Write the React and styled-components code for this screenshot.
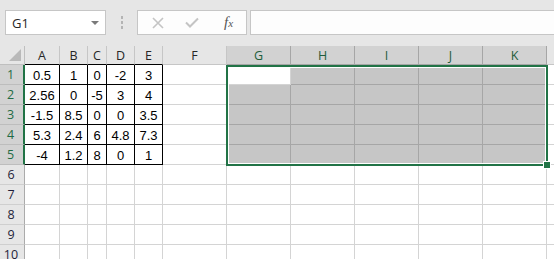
import React from 'react';
import styled, { createGlobalStyle } from 'styled-components';

const GlobalStyle = createGlobalStyle`
    html, body{
        margin: 0;
        padding: 0;
        background: #ffffff;
        overflow: hidden;
    }
    body{
        font-family: "Liberation Sans", Arial, sans-serif;
    }
`

// spreadsheet data (L only shows its gridlines at the right edge)
const columns = [
    { name: 'A', width: 35 },
    { name: 'B', width: 28 },
    { name: 'C', width: 19 },
    { name: 'D', width: 28 },
    { name: 'E', width: 28 },
    { name: 'F', width: 64 },
    { name: 'G', width: 64 },
    { name: 'H', width: 64 },
    { name: 'I', width: 64 },
    { name: 'J', width: 64 },
    { name: 'K', width: 64 },
    { name: '', width: 64 },
];

const values = [
    ['0.5', '1', '0', '-2', '3'],
    ['2.56', '0', '-5', '3', '4'],
    ['-1.5', '8.5', '0', '0', '3.5'],
    ['5.3', '2.4', '6', '4.8', '7.3'],
    ['-4', '1.2', '8', '0', '1'],
];

const rowCount = 10;
const selectedCols = ['G', 'H', 'I', 'J', 'K'];

const App = () => {
    return (
        <>
            <GlobalStyle />
            <Toolbar>
                <NameBox>
                    <NameText>G1</NameText>
                    <Caret />
                </NameBox>
                <Grip>
                    <span /><span /><span />
                </Grip>
                <FormulaButtons>
                    <svg width="12" height="12" viewBox="0 0 12 12">
                        <path d="M1 1 L11 11 M11 1 L1 11" stroke="#c4c4c4" strokeWidth="1.6" fill="none" />
                    </svg>
                    <svg width="14" height="11" viewBox="0 0 14 11">
                        <path d="M1 5.5 L5 9.5 L13 1.5" stroke="#c4c4c4" strokeWidth="2" fill="none" />
                    </svg>
                    <Fx>f<small>x</small></Fx>
                </FormulaButtons>
                <FormulaInput />
            </Toolbar>

            <Sheet $cols={columns.map((c) => c.width + 'px').join(' ')}>
                <Corner><CornerTriangle /></Corner>
                {columns.map((col, i) => (
                    <ColHeader
                        key={i}
                        $selected={selectedCols.includes(col.name)}
                        $boxed={i < 5}
                    >
                        {col.name}
                    </ColHeader>
                ))}

                {Array.from({ length: rowCount }).map((_, r) => (
                    <React.Fragment key={r}>
                        <RowHeader $selected={r < 5}>{r + 1}</RowHeader>
                        {columns.map((col, c) => {
                            const boxed = r < 5 && c < 5;
                            const shaded = r < 5 && selectedCols.includes(col.name) && !(r === 0 && col.name === 'G');
                            return (
                                <Cell key={c} $boxed={boxed} $shaded={shaded}>
                                    {boxed ? values[r][c] : ''}
                                </Cell>
                            );
                        })}
                    </React.Fragment>
                ))}

                <Selection>
                    <FillHandle />
                </Selection>
            </Sheet>
        </>
    )
}

//styled components
const Toolbar = styled.div`
    display: flex;
    align-items: center;
    height: 46px;
    padding: 0 0 1px 5px;
    box-sizing: border-box;
    background: #e6e6e6;
    font-family: "Open Sans", "Noto Sans", sans-serif;
`

const NameBox = styled.div`
    display: flex;
    align-items: center;
    justify-content: space-between;
    width: 101px;
    height: 25px;
    box-sizing: border-box;
    padding: 0 6px 0 6px;
    background: #ffffff;
    border: 1px solid #c6c6c6;
`

const NameText = styled.span`
    font-size: 13px;
    color: #262626;
`

const Caret = styled.span`
    width: 0;
    height: 0;
    border-left: 4px solid transparent;
    border-right: 4px solid transparent;
    border-top: 4px solid #7a7a7a;
    margin-top: 1px;
`

const Grip = styled.div`
    display: flex;
    flex-direction: column;
    gap: 2px;
    margin: 0 14px 0 15px;
    span{
        width: 2px;
        height: 3px;
        background: #b4b4b4;
    }
`

const FormulaButtons = styled.div`
    display: flex;
    align-items: center;
    width: 110px;
    height: 25px;
    box-sizing: border-box;
    padding: 0 8px 0 14px;
    gap: 19px;
    background: #fdfdfd;
    border: 1px solid #c6c6c6;
    svg:first-child{
        margin-right: 2px;
    }
`

const Fx = styled.span`
    font-family: "Liberation Serif", "Times New Roman", serif;
    font-style: italic;
    font-size: 15px;
    color: #555555;
    margin-left: 6px;
    small{
        font-size: 11px;
    }
`

const FormulaInput = styled.div`
    flex: 1;
    height: 25px;
    margin-left: 3px;
    box-sizing: border-box;
    background: #fdfdfd;
    border: 1px solid #c6c6c6;
    border-right: none;
`

const Sheet = styled.div`
    position: relative;
    display: grid;
    grid-template-columns: 25px ${props => props.$cols};
    grid-template-rows: 19px repeat(${rowCount}, 20px);
    width: max-content;
`

const Corner = styled.div`
    position: relative;
    background: #e6e6e6;
    border-right: 1px solid #bfbfbf;
    border-bottom: 1px solid #bfbfbf;
    box-sizing: border-box;
`

const CornerTriangle = styled.span`
    position: absolute;
    right: 3px;
    bottom: 3px;
    width: 0;
    height: 0;
    border-left: 12px solid transparent;
    border-bottom: 12px solid #b9b9b9;
`

const ColHeader = styled.div`
    display: flex;
    align-items: center;
    justify-content: center;
    box-sizing: border-box;
    background: ${props => props.$selected ? '#d2d2d2' : '#e6e6e6'};
    color: ${props => props.$selected ? '#1f5d3b' : '#262626'};
    border-right: 1px solid ${props => props.$selected ? '#a6a6a6' : '#c6c6c6'};
    border-bottom: 1px solid ${props => props.$boxed ? '#000000' : props.$selected ? '#a6a6a6' : '#c6c6c6'};
    font-family: "Open Sans", "Noto Sans", sans-serif;
    font-size: 12.5px;
`

const RowHeader = styled.div`
    display: flex;
    align-items: center;
    justify-content: center;
    padding-right: 2px;
    box-sizing: border-box;
    background: ${props => props.$selected ? '#d2d2d2' : '#e6e6e6'};
    color: ${props => props.$selected ? '#1f6b44' : '#1e1e3a'};
    border-right: ${props => props.$selected ? '2px solid #217346' : '1px solid #ababab'};
    border-bottom: 1px solid ${props => props.$selected ? '#bdbdbd' : '#cfcfcf'};
    font-family: "Open Sans", "Noto Sans", sans-serif;
    font-size: 12.5px;
`

const Cell = styled.div`
    display: flex;
    align-items: center;
    justify-content: center;
    box-sizing: border-box;
    padding-top: 1px;
    background: ${props => props.$shaded ? '#c6c6c6' : '#ffffff'};
    border-right: 1px solid ${props => props.$boxed ? '#000000' : props.$shaded ? '#a6a6a6' : '#d4d4d4'};
    border-bottom: 1px solid ${props => props.$boxed ? '#000000' : props.$shaded ? '#a6a6a6' : '#d4d4d4'};
    font-size: 13px;
    color: #000000;
    white-space: nowrap;
`

const Selection = styled.div`
    position: absolute;
    left: 226px;
    top: 19px;
    width: 322px;
    height: 101px;
    box-sizing: border-box;
    border: 2px solid #217346;
    box-shadow: inset 0 0 0 1px #ffffff;
    pointer-events: none;
`

const FillHandle = styled.span`
    position: absolute;
    right: -5px;
    bottom: -5px;
    width: 6px;
    height: 6px;
    background: #217346;
    border: 1px solid #ffffff;
`

export default App;
